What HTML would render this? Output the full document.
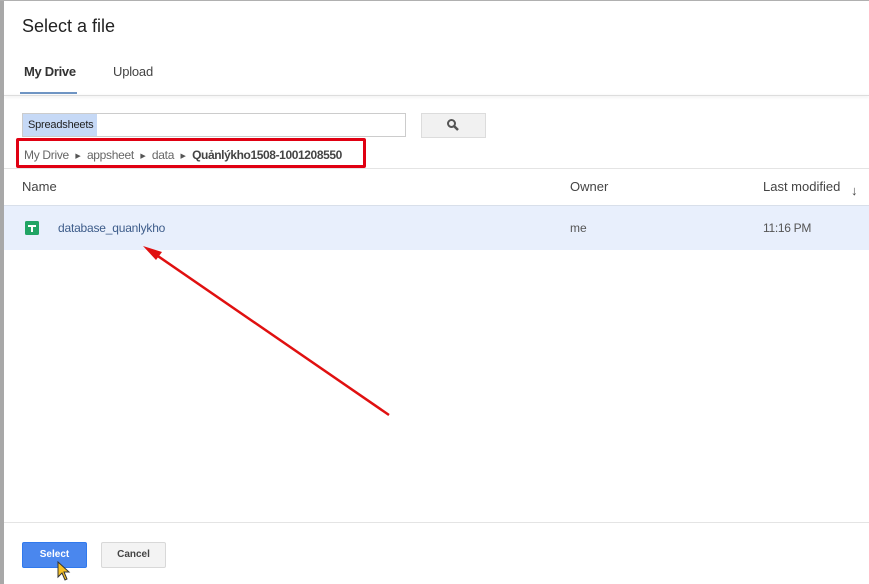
<!DOCTYPE html>
<html><head><meta charset="utf-8"><style>
body{margin:0;width:869px;height:584px;overflow:hidden;background:#fff;font-family:"Liberation Sans",Arial,sans-serif;position:relative}
.a{position:absolute}
.s{font-size:7px;color:#555;display:inline-block;width:18px;text-align:center;vertical-align:1px}
</style></head><body>
<div class="a" style="left:0;top:0;width:4px;height:584px;background:#a8a8a8"></div>
<div class="a" style="left:0;top:0;width:869px;height:1px;background:#b0b0b0"></div>
<div class="a" style="left:22px;top:16px;font-size:18px;color:#222">Select a file</div>
<div class="a" style="left:24px;top:64px;font-size:13px;font-weight:bold;color:#333;letter-spacing:-0.3px">My Drive</div>
<div class="a" style="left:113px;top:64px;font-size:13px;color:#444;letter-spacing:-0.2px">Upload</div>
<div class="a" style="left:20px;top:92px;width:57px;height:2px;background:#6f95c4"></div>
<div class="a" style="left:4px;top:95px;width:865px;height:1px;background:#ddd;box-shadow:0 1px 3px rgba(0,0,0,.15)"></div>
<div class="a" style="left:22px;top:113px;width:384px;height:24px;border:1px solid #ccc;box-sizing:border-box"></div>
<div class="a" style="left:23px;top:114px;width:74px;height:22px;background:#c6d9f6;font-size:11px;color:#222;line-height:22px;padding-left:5px;box-sizing:border-box;letter-spacing:-0.2px">Spreadsheets</div>
<div class="a" style="left:421px;top:113px;width:65px;height:25px;background:#f1f1f1;border:1px solid #dcdcdc;box-sizing:border-box"></div>
<svg class="a" style="left:446px;top:118px" width="14" height="14" viewBox="0 0 14 14"><circle cx="5.5" cy="5.5" r="3.5" fill="none" stroke="#555" stroke-width="2"/><line x1="8" y1="8" x2="12" y2="12" stroke="#555" stroke-width="2.5"/></svg>
<div class="a" style="left:16px;top:138px;width:350px;height:30px;border:3px solid #e00012;border-radius:2px;box-sizing:border-box"></div>
<div class="a" style="left:24px;top:148px;font-size:12px;color:#666;white-space:nowrap;letter-spacing:-0.3px">My Drive<span class="s">▶</span>appsheet<span class="s">▶</span>data<span class="s">▶</span><b style="color:#444;letter-spacing:-0.4px">Quảnlýkho1508-1001208550</b></div>
<div class="a" style="left:4px;top:168px;width:865px;height:1px;background:#e4e4e4"></div>
<div class="a" style="left:22px;top:179px;font-size:13px;color:#444">Name</div>
<div class="a" style="left:570px;top:179px;font-size:13px;color:#444">Owner</div>
<div class="a" style="left:763px;top:179px;font-size:13px;color:#444">Last modified</div>
<div class="a" style="left:851px;top:183px;font-size:13px;color:#444">↓</div>
<div class="a" style="left:4px;top:205px;width:865px;height:45px;background:#e8effc;border-top:1px solid #d8dfea;box-sizing:border-box"></div>
<svg class="a" style="left:25px;top:221px" width="14" height="14" viewBox="0 0 14 14"><rect width="14" height="14" rx="1.5" fill="#21a464"/><rect x="3" y="4" width="8" height="2" fill="#fff"/><rect x="6" y="4" width="2" height="7" fill="#fff"/></svg>
<div class="a" style="left:58px;top:221px;font-size:12px;color:#3d5c8a;letter-spacing:-0.2px">database_quanlykho</div>
<div class="a" style="left:570px;top:221px;font-size:12px;color:#555">me</div>
<div class="a" style="left:763px;top:221px;font-size:12px;color:#555;letter-spacing:-0.3px">11:16 PM</div>
<svg class="a" style="left:0;top:0" width="869" height="584"><line x1="389" y1="415" x2="152" y2="252" stroke="#e01010" stroke-width="2.5"/><polygon points="143,246 162,252 156,260" fill="#e01010"/></svg>
<div class="a" style="left:4px;top:522px;width:865px;height:1px;background:#e4e4e4"></div>
<div class="a" style="left:22px;top:542px;width:65px;height:26px;background:#4a87ee;border:1px solid #3079ed;box-sizing:border-box;border-radius:2px;color:#fff;font-size:10px;font-weight:bold;text-align:center;line-height:24px">Select</div>
<div class="a" style="left:101px;top:542px;width:65px;height:26px;background:#f3f3f3;border:1px solid #d8d8d8;box-sizing:border-box;border-radius:2px;color:#444;font-size:10px;font-weight:bold;text-align:center;line-height:24px">Cancel</div>
<svg class="a" style="left:57px;top:561px" width="14" height="20" viewBox="0 0 14 20"><polygon points="1,1 1,16 5,12 8,19 10,18 7,11 12,11" fill="#f5c026" stroke="#333" stroke-width="1"/></svg>
</body></html>
